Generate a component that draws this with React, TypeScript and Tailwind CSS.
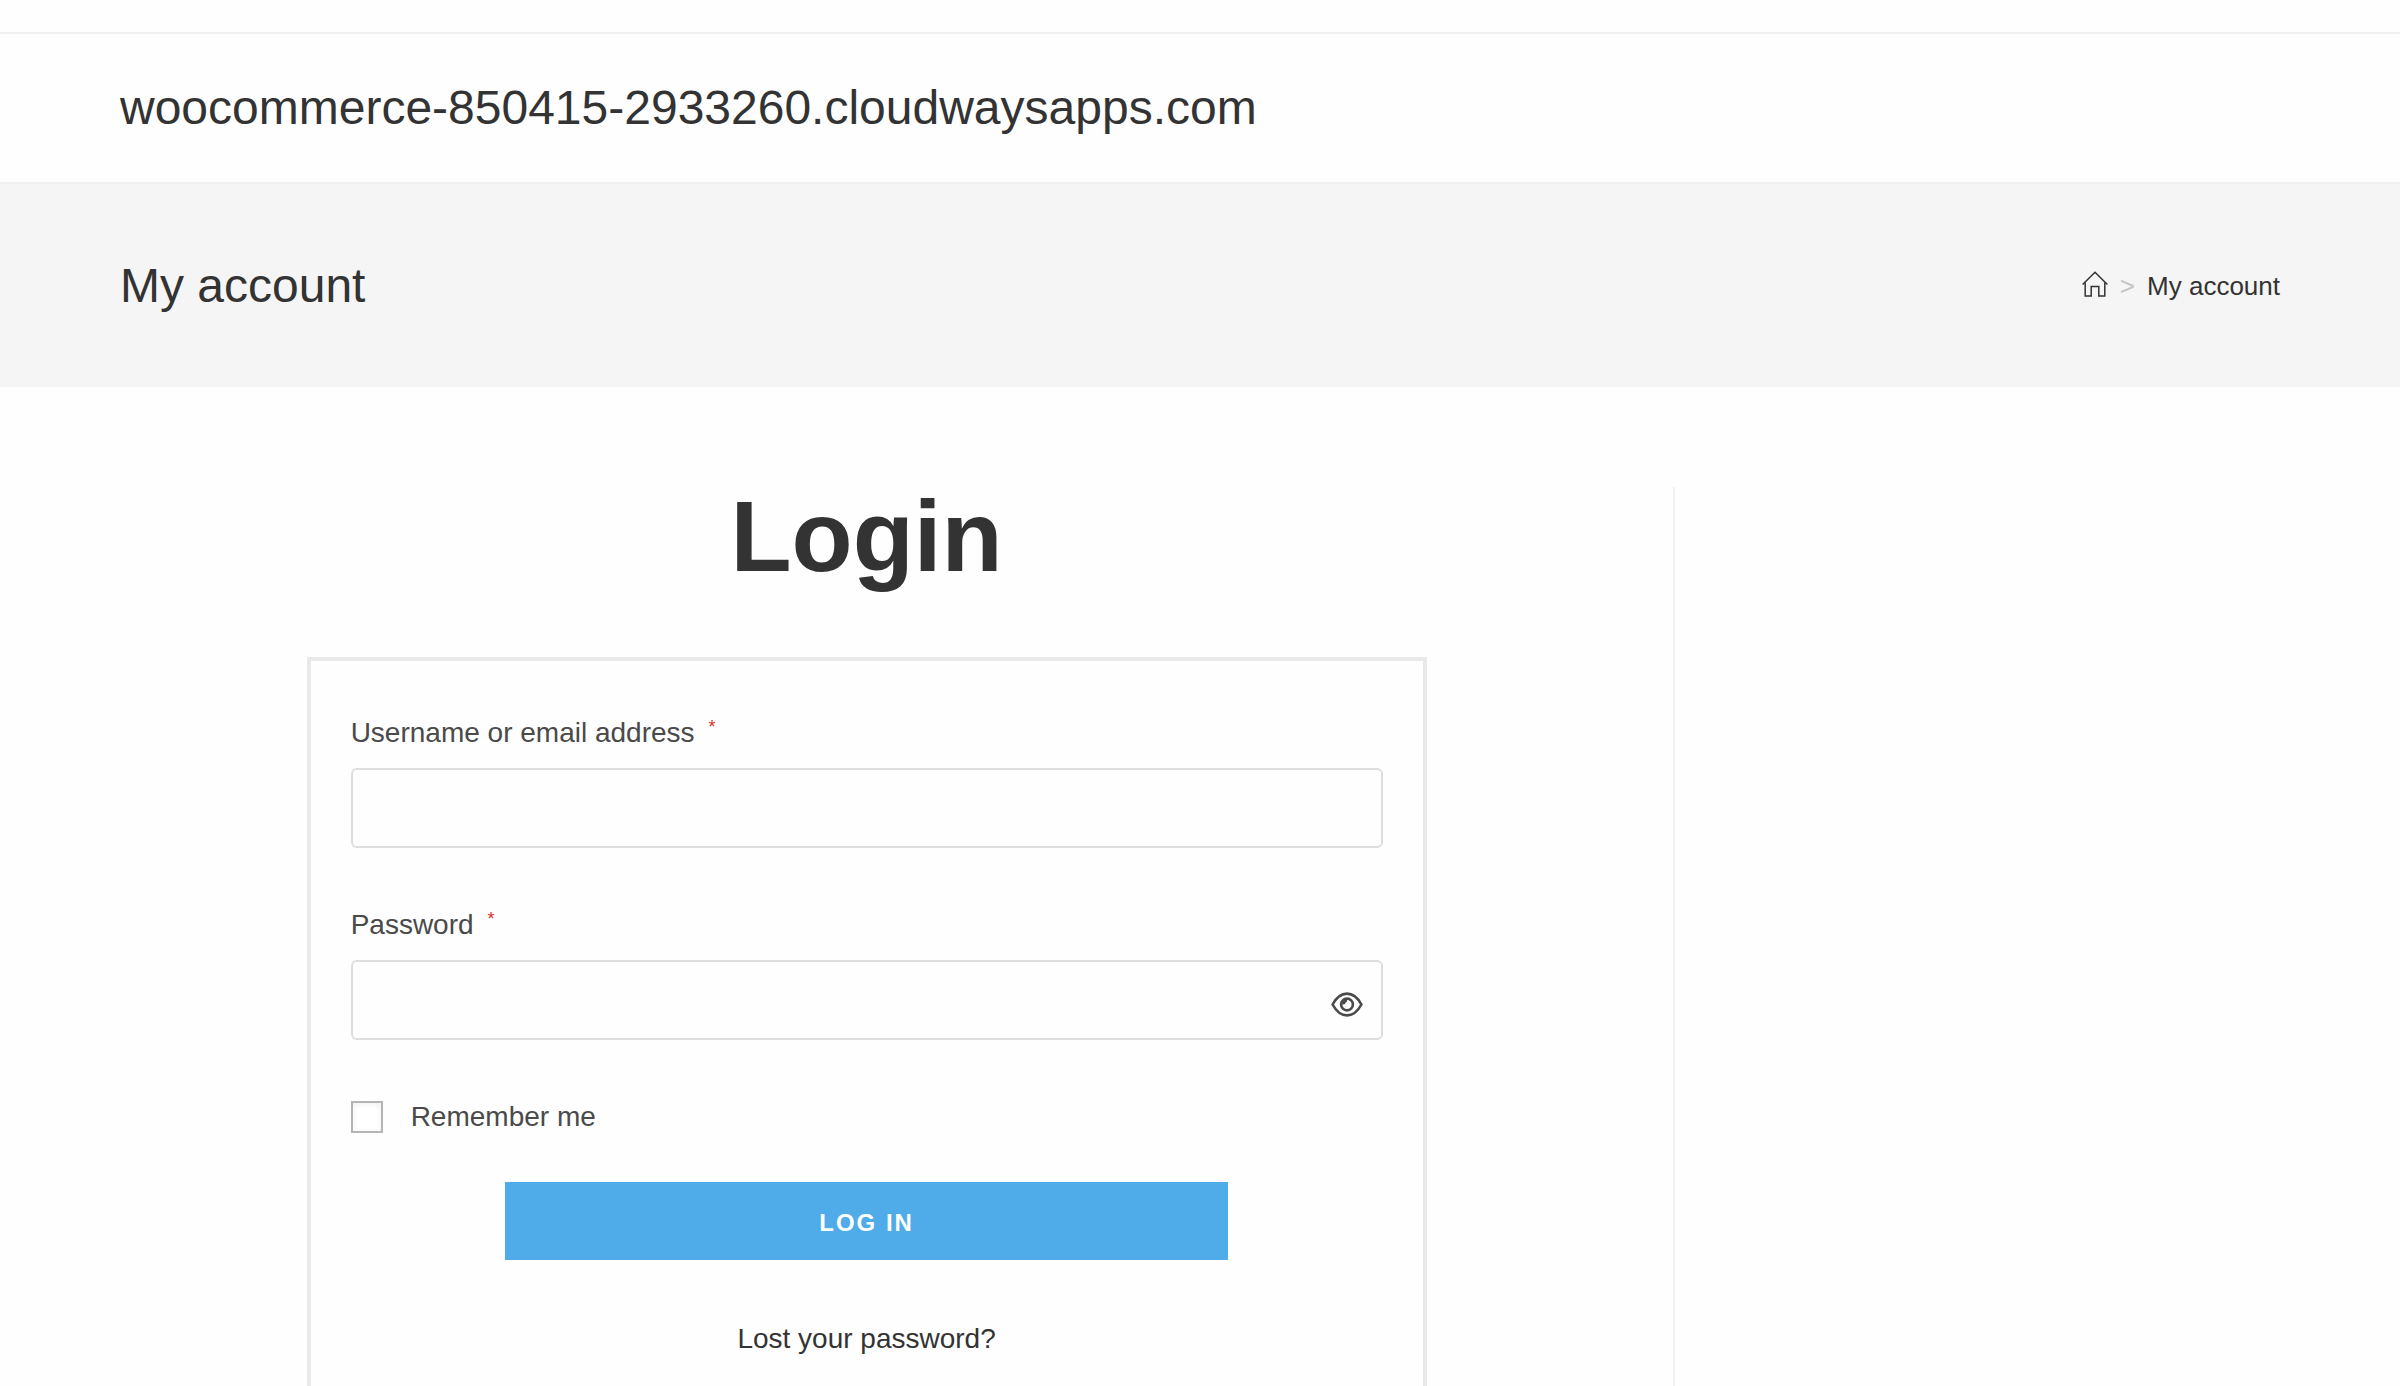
import React from 'react';

function Required() {
  return (
    <sup aria-hidden="true" className="ml-3.5 text-lg leading-none text-[#d9302c]">
      *
    </sup>
  );
}

function HomeIcon() {
  return (
    <svg width="26" height="26" viewBox="0 0 26 26" fill="none" stroke="#333333" strokeWidth="1.5">
      <path d="M.6 13.5 13 1.2 25.4 13.5" />
      <path d="M3.200 11.500V25h6V15.600h7.600V25h6V11.500" />
    </svg>
  );
}

function EyeIcon() {
  return (
    <svg width="32" height="26" viewBox="0 0 32 26" fill="none" stroke="#4a4a4a" strokeWidth="2.6">
      <path d="M1.6 12.500C5.500 5.200 10.400 1.600 16 1.600S26.500 5.200 30.400 12.500C26.500 19.800 21.600 23.400 16 23.400S5.500 19.800 1.600 12.500Z" />
      <circle cx="16" cy="12.500" r="5.900" />
      <path d="M11 12.500A5 5 0 0 1 16 7.500C16.400 9.500 15.800 10 14.600 10.600C14.600 12 13.400 12.800 11 12.500Z" fill="#4a4a4a" stroke="none" />
    </svg>
  );
}

const labelClass = 'mb-[3px] block h-16 text-[28px] leading-[64px]';
const inputClass = 'block h-20 w-full rounded-md border-2 border-[#dddddd] bg-transparent px-6 text-[28px]';

export default function App() {
  return (
    <div className="h-screen overflow-hidden bg-[#fefefe] font-['Liberation_Sans',Arial,sans-serif] text-[#333333]">
      <div className="h-[34px] border-b-2 border-[#f1f1f1]" />
      <header className="flex items-center border-b-2 border-[#f1f1f1] px-[120px] py-11">
        <a href="#" className="text-[48px] leading-[60px]">
          woocommerce-850415-2933260.cloudwaysapps.com
        </a>
      </header>
      <div className="flex items-center justify-between bg-[#f5f5f5] px-[120px] pt-[72px] pb-[71px]">
        <h1 className="text-[48px] leading-[60px]">My account</h1>
        <nav aria-label="Breadcrumb" className="flex items-center gap-3 text-[26px]">
          <a href="#" aria-label="Home" className="pb-1">
            <HomeIcon />
          </a>
          <span className="text-[#c4c4c4]">&gt;</span>
          <a href="#">My account</a>
        </nav>
      </div>
      <main className="px-[120px] pt-[100px]">
        <section className="w-[72%] border-r-2 border-[#f1f1f1] pr-[60px]">
          <div className="mx-auto w-3/4">
            <h2 className="text-center text-[100px] leading-[98px] font-bold">Login</h2>
            <form className="mt-[72px] border-4 border-[#e9e9e9] p-10 text-[#4a4a4a]">
              <div className="mb-[45px]">
                <label htmlFor="username" className={labelClass}>
                  Username or email address
                  <Required />
                </label>
                <input id="username" type="text" className={inputClass} />
              </div>
              <div>
                <label htmlFor="password" className={labelClass}>
                  Password
                  <Required />
                </label>
                <div className="relative">
                  <input id="password" type="password" className={inputClass} />
                  <button type="button" aria-label="Show password" className="absolute top-8 right-5">
                    <EyeIcon />
                  </button>
                </div>
              </div>
              <label className="mt-[61px] flex h-8 items-center gap-7 text-[28px]">
                <input
                  type="checkbox"
                  className="size-8 appearance-none border-2 border-[#b4b4b4] bg-white shadow-[inset_0_2px_6px_rgba(0,0,0,0.06)]"
                />
                Remember me
              </label>
              <button
                type="button"
                className="mx-auto mt-[49px] block h-[78px] w-[70%] bg-[#50abe9] pt-1 text-[24px] font-bold tracking-[2px] text-white uppercase"
              >
                Log in
              </button>
              <p className="mt-[54px] mb-20 text-center text-[28px] leading-[50px]">
                <a href="#" className="text-[#333333]">
                  Lost your password?
                </a>
              </p>
            </form>
          </div>
        </section>
      </main>
    </div>
  );
}
